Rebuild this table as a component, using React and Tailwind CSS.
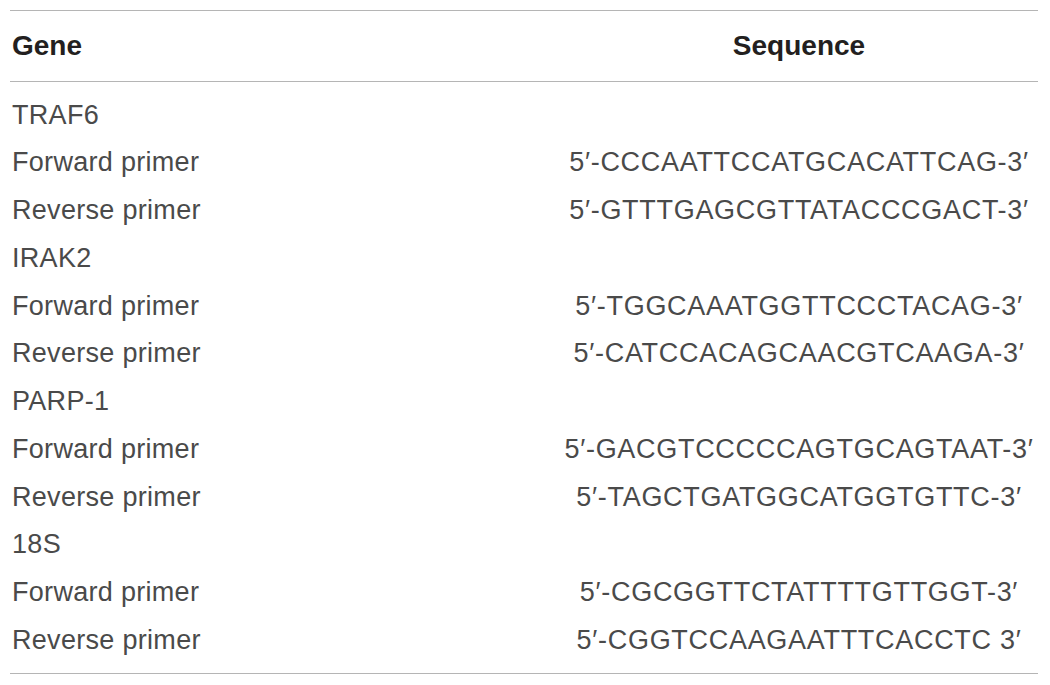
const rows = [
  { gene: "TRAF6", seq: "" },
  { gene: "Forward primer", seq: "5′-CCCAATTCCATGCACATTCAG-3′" },
  { gene: "Reverse primer", seq: "5′-GTTTGAGCGTTATACCCGACT-3′" },
  { gene: "IRAK2", seq: "" },
  { gene: "Forward primer", seq: "5′-TGGCAAATGGTTCCCTACAG-3′" },
  { gene: "Reverse primer", seq: "5′-CATCCACAGCAACGTCAAGA-3′" },
  { gene: "PARP-1", seq: "" },
  { gene: "Forward primer", seq: "5′-GACGTCCCCCAGTGCAGTAAT-3′" },
  { gene: "Reverse primer", seq: "5′-TAGCTGATGGCATGGTGTTC-3′" },
  { gene: "18S", seq: "" },
  { gene: "Forward primer", seq: "5′-CGCGGTTCTATTTTGTTGGT-3′" },
  { gene: "Reverse primer", seq: "5′-CGGTCCAAGAATTTCACCTC 3′" },
];

export default function App() {
  return (
    <div className="min-h-screen bg-white pl-[10px] pt-[10px] font-['Liberation_Sans',Arial,sans-serif]">
      <div className="w-[1028px] border-y-[1.5px] border-[#b5b5b5]">
        <div className="grid grid-cols-[550px_1fr] h-[71px] items-center border-b-[1.5px] border-[#b5b5b5] text-[28px] font-bold text-[#231f20]">
          <div className="pl-[2px]">Gene</div>
          <div className="text-center">Sequence</div>
        </div>
        <div className="py-[9px]">
          {rows.map((r, i) => (
            <div key={i} className="grid grid-cols-[550px_1fr] h-[47.75px] items-center text-[27px] text-[#4a4a4a]">
              <div className="pl-[2px] tracking-[0.3px]">{r.gene}</div>
              <div className="text-center tracking-[0.7px]">{r.seq}</div>
            </div>
          ))}
        </div>
      </div>
    </div>
  );
}
